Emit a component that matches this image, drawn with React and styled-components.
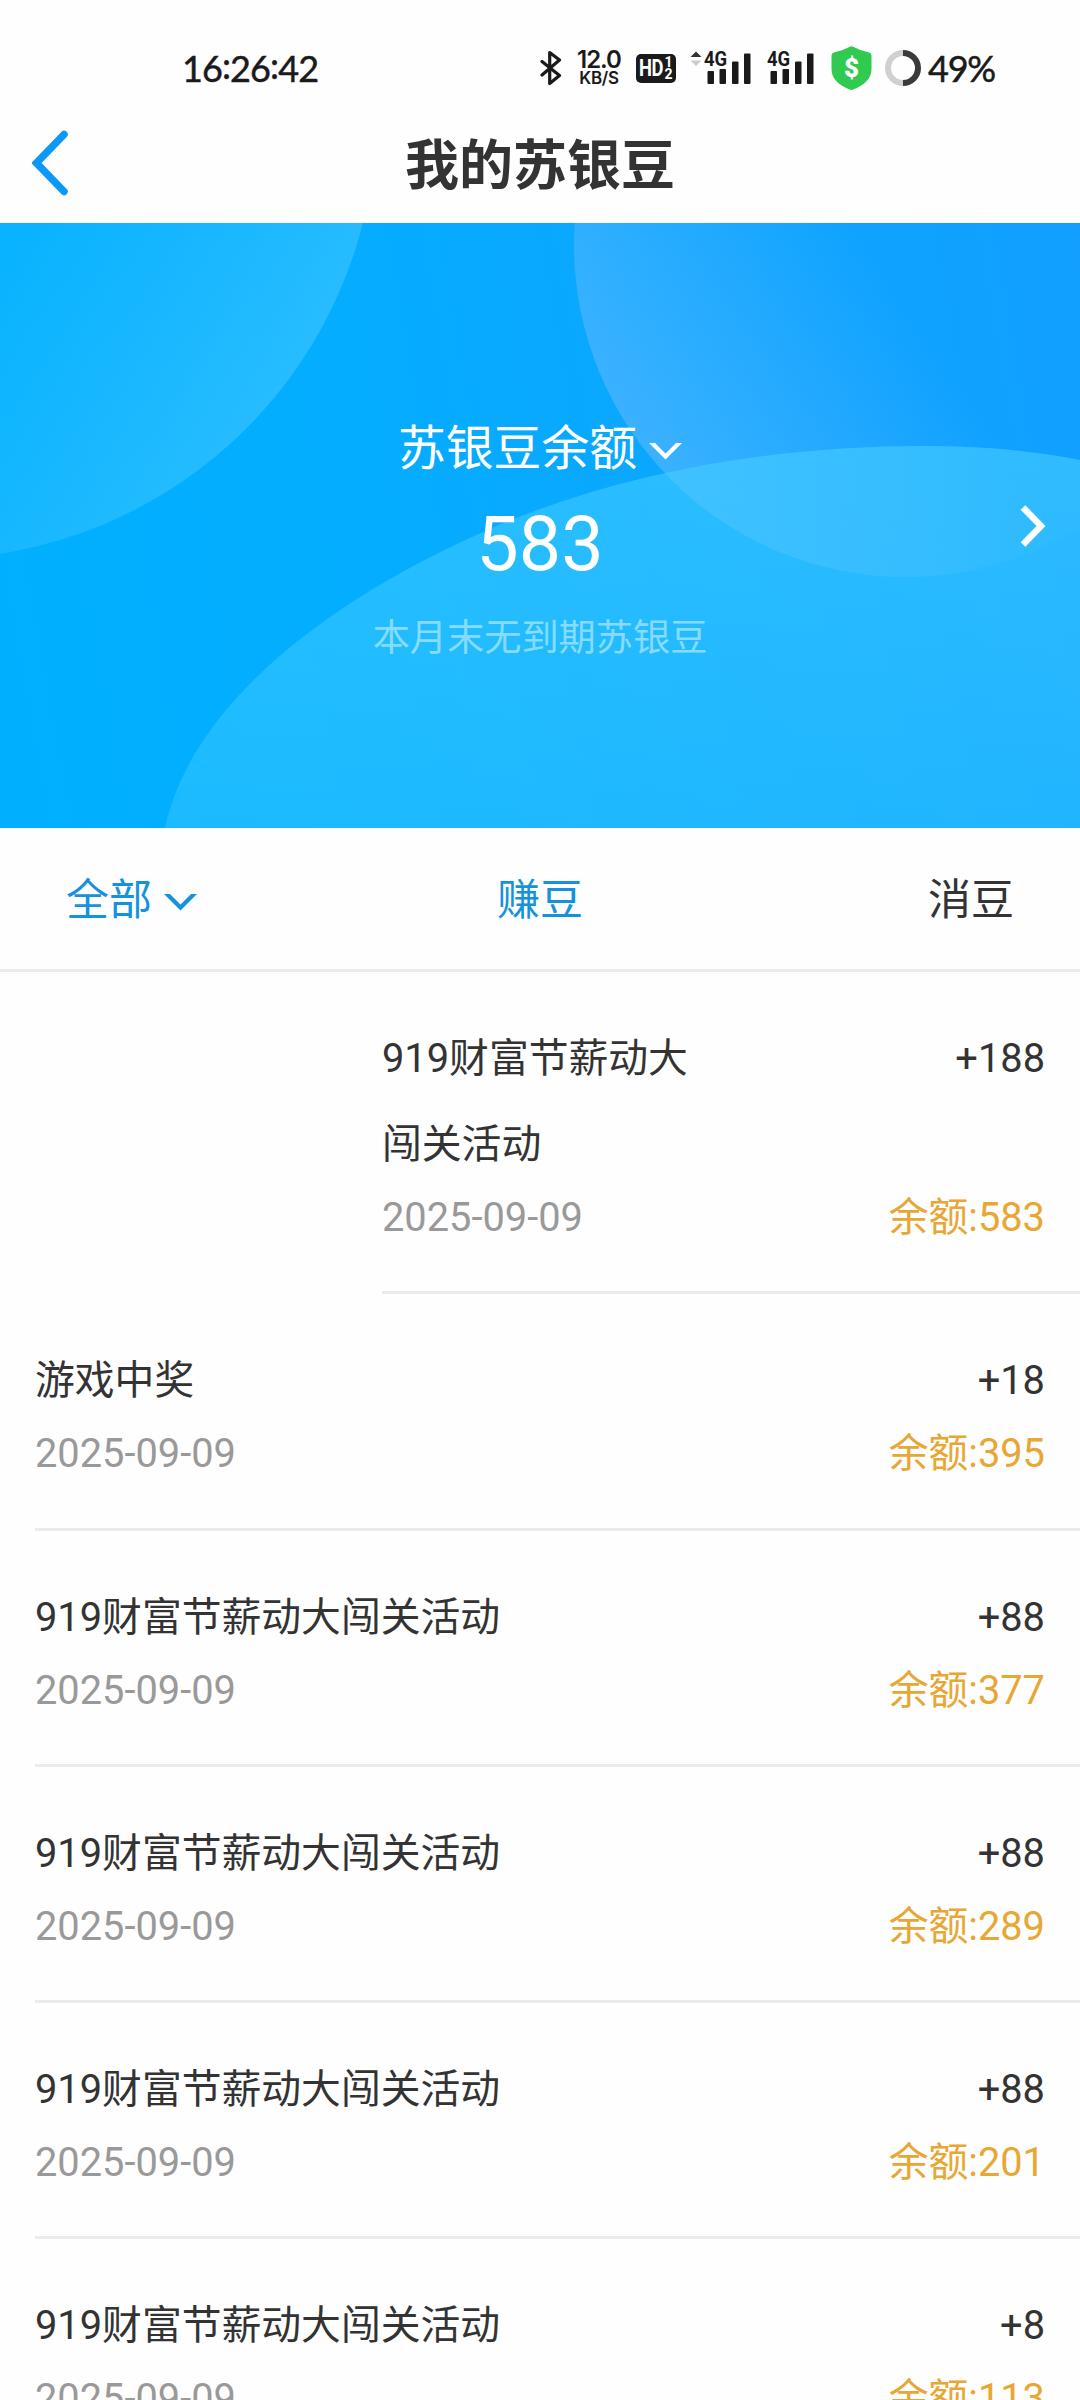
import React from "react";
import styled, { createGlobalStyle } from "styled-components";

const records = [
  { title: "919财富节薪动大闯关活动", date: "2025-09-09", amount: "+188", balance: 583, indent: true },
  { title: "游戏中奖", date: "2025-09-09", amount: "+18", balance: 395 },
  { title: "919财富节薪动大闯关活动", date: "2025-09-09", amount: "+88", balance: 377 },
  { title: "919财富节薪动大闯关活动", date: "2025-09-09", amount: "+88", balance: 289 },
  { title: "919财富节薪动大闯关活动", date: "2025-09-09", amount: "+88", balance: 201 },
  { title: "919财富节薪动大闯关活动", date: "2025-09-09", amount: "+8", balance: 113 },
];

function Bluetooth() {
  return (
    <svg width="22" height="36" viewBox="0 0 22 36" fill="none" stroke="#1a1a1a" strokeWidth="3.2" strokeLinejoin="round" strokeLinecap="round">
      <path d="M2 11.500 19.500 25.500 9.700 33.500V2.500l9.800 7.500L2 25" />
    </svg>
  );
}

function Signal() {
  return (
    <SignalBox>
      <svg width="44" height="34" viewBox="0 0 44 34" fill="#1a1a1a">
        <rect x="0.5" y="20" width="6.500" height="13" rx="1" />
        <rect x="12.5" y="18" width="6.500" height="15" rx="1" />
        <rect x="25" y="10.500" width="6.500" height="22.500" rx="1" />
        <rect x="37" y="2.500" width="6.500" height="30.500" rx="1" />
      </svg>
      <NetType>4G</NetType>
    </SignalBox>
  );
}

function Shield() {
  return (
    <ShieldBox>
      <svg width="41" height="44" viewBox="0 0 41 44" fill="#30ca50">
        <path d="M18.8.7q1.7-.9 3.4 0Q29 4.6 37.5 6.2 40.5 7 40.5 10v13c0 10-7 15.500-17.500 20.300q-2.500 1.200-5 0C7.500 38.500.5 33 .5 23V10q0-3 3-3.800Q12 4.600 18.800.7Z" />
      </svg>
      <Dollar>$</Dollar>
    </ShieldBox>
  );
}

function BatteryRing() {
  return (
    <svg width="36" height="36" viewBox="0 0 36 36" fill="none" strokeWidth="6">
      <path d="M18 3a15 15 0 0 0 0 30" stroke="#d0d0d0" />
      <path d="M18 3a15 15 0 0 1 0 30" stroke="#3a3a3a" />
    </svg>
  );
}

function Chevron() {
  return (
    <svg width="33" height="17" viewBox="0 0 33 17" fill="currentColor">
      <path d="M0 0h6l10.500 10.500L27 0h6L16.500 16.500Z" />
    </svg>
  );
}

function App() {
  return (
    <Page>
      <GlobalStyle />
      <StatusBar>
        <Clock>
          16<Colon>:</Colon>26<Colon>:</Colon>42
        </Clock>
        <StatusIcons>
          <Bluetooth />
          <Speed>
            <b>12.0</b>
            <span>KB/S</span>
          </Speed>
          <HdBadge>
            <HdText>HD</HdText>
            <HdNumbers>
              <span>1</span>
              <span>2</span>
            </HdNumbers>
          </HdBadge>
          <Traffic width="12" height="34" viewBox="0 0 12 34">
            <path d="M0.500 6 6 0.500 11.500 6Z" fill="#333" />
            <path d="M0.500 9.500h11L6 15Z" fill="#ccc" />
          </Traffic>
          <Signal />
          <SecondSim>
            <Signal />
          </SecondSim>
          <Shield />
          <Battery>
            <BatteryRing />
            <Percent>49%</Percent>
          </Battery>
        </StatusIcons>
      </StatusBar>

      <NavBar>
        <svg width="36" height="66" viewBox="0 0 36 66" fill="none" stroke="#0c98f7" strokeWidth="7.500" strokeLinecap="round">
          <path d="M32 4.500 4.500 33 32 61.500" />
        </svg>
        <NavTitle>我的苏银豆</NavTitle>
      </NavBar>

      <Hero>
        <HeroShapes />
        <HeroBody>
          <HeroLabel>
            苏银豆余额
            <Chevron />
          </HeroLabel>
          <HeroAmount>583</HeroAmount>
          <HeroHint>本月末无到期苏银豆</HeroHint>
        </HeroBody>
        <HeroArrow width="26" height="42" viewBox="0 0 26 42" fill="none" stroke="#fff" strokeWidth="6.500">
          <path d="M3 2.500 21 21 3 39.500" />
        </HeroArrow>
      </Hero>

      <Tabs>
        <Tab $active>
          全部
          <Chevron />
        </Tab>
        <Tab $active>赚豆</Tab>
        <Tab>消豆</Tab>
      </Tabs>

      <List>
        {records.map((item, i) => (
          <Row key={i} $indent={item.indent}>
            <Info>
              <Title>{item.title}</Title>
              <DateText>{item.date}</DateText>
            </Info>
            <Figures>
              <Amount>{item.amount}</Amount>
              <Balance>余额:{item.balance}</Balance>
            </Figures>
          </Row>
        ))}
      </List>
    </Page>
  );
}

//soft overlapping shapes behind the balance
function HeroShapes() {
  return (
    <Shapes viewBox="0 0 1080 605" preserveAspectRatio="none">
      <defs>
        <linearGradient id="left" gradientUnits="userSpaceOnUse" x1="20" y1="0" x2="330" y2="190">
          <stop offset="0" stopColor="#38c6ff" stopOpacity="0.15" />
          <stop offset="1" stopColor="#48caff" stopOpacity="0.6" />
        </linearGradient>
        <linearGradient id="right" gradientUnits="userSpaceOnUse" x1="660" y1="270" x2="920" y2="100">
          <stop offset="0" stopColor="#6ebcff" stopOpacity="0.5" />
          <stop offset="1" stopColor="#6ebcff" stopOpacity="0" />
        </linearGradient>
        <linearGradient id="lens" gradientUnits="userSpaceOnUse" x1="660" y1="250" x2="1080" y2="250">
          <stop offset="0" stopColor="#5cc8ff" stopOpacity="0.12" />
          <stop offset="1" stopColor="#5cc8ff" stopOpacity="0.08" />
        </linearGradient>
        <linearGradient id="bottom" x1="0" y1="0" x2="0" y2="1">
          <stop offset="0" stopColor="#40ccff" stopOpacity="0.6" />
          <stop offset="1" stopColor="#2cc2ff" stopOpacity="0.6" />
        </linearGradient>
        <clipPath id="wave">
          <path d="M165 605C192 480 330 377 483 309 620 248 775 223 925 223q85 0 155 14v368Z" />
        </clipPath>
      </defs>
      <circle cx="-68.600" cy="-109" r="445" fill="url(#left)" />
      <circle cx="906" cy="22" r="332" fill="url(#right)" />
      <g clipPath="url(#wave)">
        <rect x="165" y="223" width="915" height="382" fill="url(#bottom)" />
        <circle cx="906" cy="22" r="332" fill="url(#lens)" />
      </g>
    </Shapes>
  );
}

export default App;

const GlobalStyle = createGlobalStyle`
  * {
    box-sizing: border-box;
  }

  body {
    margin: 0;
    background-color: #fefefe;
    color: #333;
    font-family: Roboto, "Noto Sans CJK SC", sans-serif;
  }

  svg {
    display: block;
    flex-shrink: 0;
  }
`;

const Page = styled.div`
  width: 1080px;
  height: 2400px;
  overflow: hidden;
`;

const StatusBar = styled.header`
  display: flex;
  justify-content: space-between;
  align-items: center;
  height: 120px;
  padding: 16px 85px 0 182px;
  color: #1a1a1a;
  font-family: Lato, sans-serif;
`;

const Clock = styled.div`
  font-size: 36px;
  line-height: 40px;
  letter-spacing: -0.9px;
  -webkit-text-stroke: 0.5px #1a1a1a;
`;

const Colon = styled.span`
  position: relative;
  top: -3px;
`;

const StatusIcons = styled.div`
  display: flex;
  align-items: center;
`;

const Speed = styled.div`
  display: flex;
  flex-direction: column;
  align-items: center;
  width: 46px;
  margin: 1px 14px 0;
  font-family: Inter, sans-serif;

  > b {
    font-size: 24px;
    font-weight: 600;
    line-height: 19px;
    letter-spacing: -1px;
  }

  > span {
    font-size: 17px;
    font-weight: 600;
    line-height: 18px;
    letter-spacing: -0.3px;
  }
`;

const HdBadge = styled.div`
  display: flex;
  justify-content: center;
  align-items: center;
  gap: 1px;
  width: 40px;
  height: 29px;
  border-radius: 5px;
  background-color: #1a1a1a;
  color: white;
  font-family: Roboto, sans-serif;
  font-weight: 700;
`;

const HdText = styled.span`
  width: 24px;
  font-size: 23px;
  letter-spacing: -0.5px;
  transform: scaleX(0.8);
  transform-origin: left;
`;

const HdNumbers = styled.div`
  display: flex;
  flex-direction: column;
  font-size: 14px;
  line-height: 12px;
`;

const Traffic = styled.svg`
  margin-left: 14px;
  margin-right: 5px;
`;

const SignalBox = styled.div`
  position: relative;
`;

const NetType = styled.span`
  position: absolute;
  top: 0;
  left: -3px;
  background-color: #fefefe;
  font-family: Roboto, sans-serif;
  font-size: 21px;
  font-weight: 700;
  line-height: 17px;
  transform: scaleX(0.88);
  transform-origin: left;
`;

const SecondSim = styled.div`
  margin-left: 19px;
  margin-right: 17px;
`;

const ShieldBox = styled.div`
  display: grid;
  place-items: center;

  > * {
    grid-area: 1 / 1;
  }
`;

const Dollar = styled.span`
  color: white;
  font-family: Roboto, sans-serif;
  font-size: 26px;
  font-weight: 900;
  line-height: 30px;
`;

const Battery = styled.div`
  display: flex;
  align-items: center;
  gap: 7px;
  margin-left: 13px;
`;

const Percent = styled.span`
  font-size: 36px;
  line-height: 40px;
  letter-spacing: -1.2px;
  -webkit-text-stroke: 0.5px #1a1a1a;
`;

const NavBar = styled.nav`
  display: grid;
  grid-template-columns: 36px 1fr 36px;
  align-items: center;
  height: 103px;
  padding: 0 32px 17px;
`;

const NavTitle = styled.h1`
  margin: 0;
  padding-top: 8px;
  text-align: center;
  font-size: 54px;
  font-weight: 700;
  line-height: 78px;
`;

const Hero = styled.section`
  position: relative;
  display: flex;
  justify-content: center;
  height: 605px;
  background: linear-gradient(80deg, #00b0ff 0%, #04adff 35%, #0ca6ff 65%, #129fff 100%);
  color: white;
`;

const Shapes = styled.svg`
  position: absolute;
  top: 0;
  left: 0;
  width: 100%;
  height: 100%;
`;

const HeroBody = styled.div`
  position: relative;
  display: flex;
  flex-direction: column;
  align-items: center;
  padding-top: 190px;
`;

const HeroLabel = styled.div`
  display: flex;
  align-items: center;
  gap: 12px;
  font-size: 47.8px;
  line-height: 72px;

  > svg {
    margin-top: 5px;
  }
`;

const HeroAmount = styled.div`
  height: 123px;
  font-size: 75.5px;
  line-height: 119px;
`;

const HeroHint = styled.div`
  color: #86dcff;
  font-size: 37.2px;
  line-height: 60px;
`;

const HeroArrow = styled.svg`
  position: absolute;
  top: 282px;
  right: 34px;
`;

const Tabs = styled.div`
  display: grid;
  grid-template-columns: 1fr auto 1fr;
  align-items: center;
  height: 144px;
  padding: 2px 66px 0;
  border-bottom: 3px solid #ebebeb;
`;

const Tab = styled.div`
  display: flex;
  align-items: center;
  gap: 12px;
  color: ${(props) => (props.$active ? "#1492dc" : "#333")};
  font-size: 43px;
  line-height: 64px;

  &:last-child {
    justify-self: end;
  }

  > svg {
    margin-top: 5px;
  }
`;

const List = styled.div`
  display: flex;
  flex-direction: column;
`;

const Row = styled.div`
  display: flex;
  justify-content: space-between;
  margin-left: ${(props) => (props.$indent ? "382px" : "35px")};
  padding: 44px 35px 43.25px 0;
  border-bottom: 3px solid #ebebeb;
  font-size: 39.8px;
`;

const Info = styled.div`
  width: 50%;
`;

const Title = styled.div`
  line-height: 86px;
`;

const DateText = styled.div`
  color: #999;
  line-height: 60px;
`;

const Figures = styled.div`
  display: flex;
  flex-direction: column;
  justify-content: space-between;
  text-align: right;
`;

const Amount = styled.div`
  line-height: 86px;
`;

const Balance = styled.div`
  color: #e8a735;
  line-height: 60px;
`;
